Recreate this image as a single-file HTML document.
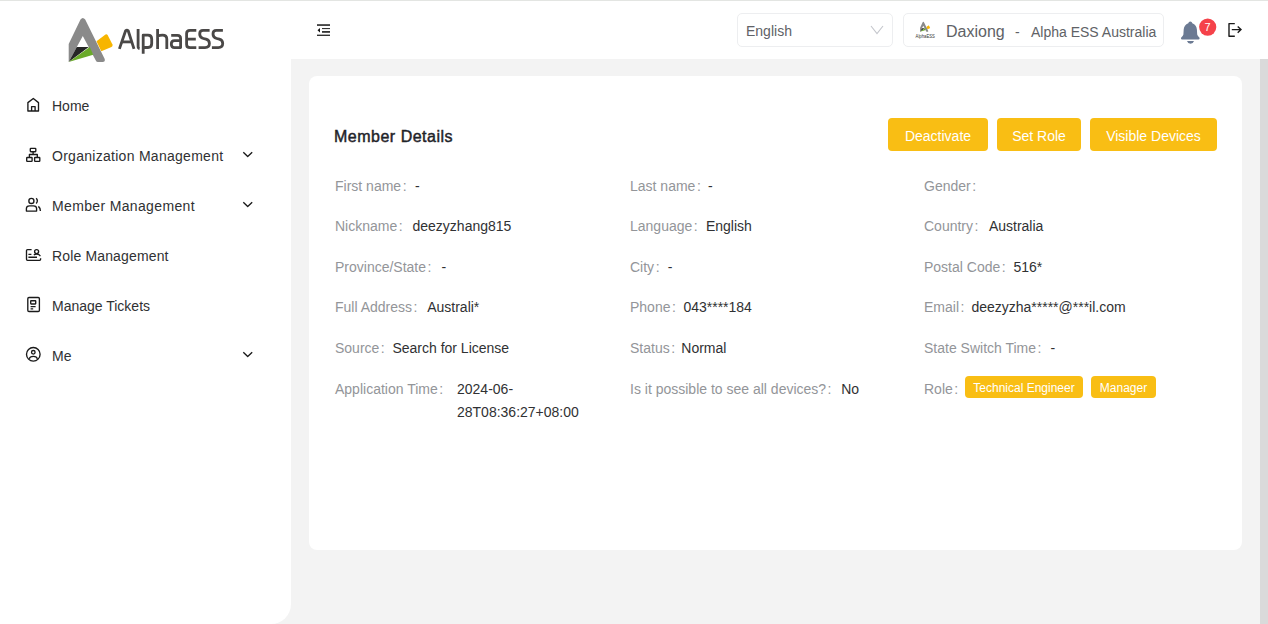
<!DOCTYPE html>
<html><head><meta charset="utf-8">
<style>
*{box-sizing:border-box;margin:0;padding:0}
html,body{width:1268px;height:624px;overflow:hidden;background:#f3f3f3;font-family:"Liberation Sans",sans-serif;}
.abs{position:absolute}
#topline{left:0;top:0;width:1268px;height:1px;background:#e3e5e2}
#header{left:291px;top:0;width:977px;height:59px;background:#fff}
#sidebar{left:0;top:0;width:291px;height:624px;background:#fff;border-bottom-right-radius:20px}
#scroll{left:1260px;top:59px;width:8px;height:565px;background:#dadada}
#card{left:309px;top:76px;width:933px;height:474px;background:#fff;border-radius:8px}
.nav{position:absolute;left:52px;font-size:14px;line-height:22px;color:#303133;white-space:nowrap}
.chev{position:absolute;left:241px}
.lbl{position:absolute;font-size:14px;line-height:20px;color:#939599;white-space:nowrap}
.val{color:#303133}
.c{margin-left:1.5px}
.btn{position:absolute;top:118px;height:33px;background:#f9be14;border-radius:4px;color:#fff;font-size:14px;line-height:37px;text-align:center;white-space:nowrap}
.tag{position:absolute;top:376px;height:22px;background:#f9be14;border-radius:4px;color:#fff;font-size:12px;line-height:25px;text-align:center;white-space:nowrap}
</style></head>
<body>
<div id="sidebar" class="abs"></div>
<div id="header" class="abs"></div>
<div id="topline" class="abs"></div>
<div id="scroll" class="abs"></div>
<div id="card" class="abs"></div>

<!-- logo -->
<svg class="abs" style="left:0;top:0" width="291" height="70" viewBox="0 0 291 70">
  <path d="M68.7,62 L68.7,44 L80.5,19.5 Q82.8,16.5 85.2,19.5 L104.7,59 Q105.5,62 102.5,62 L98,62 Q96.5,62 95.8,60.5 L82.8,36 L76.8,47 L68.7,62 Z" fill="#8a8a8a"/>
  <path d="M68.7,62 L76.8,47 L88.8,47 Z" fill="#262626"/>
  <path d="M68.7,62 L89.8,47 L93.2,54.7 Z" fill="#6aaa2a"/>
  <path d="M96.5,41.3 L105.5,34.5 Q106.8,33.8 107.6,35 L112.5,44.5 Q113,46.2 111.5,47 L101.3,51.3 Z" fill="#f7b500"/>
  <g fill="none" stroke="#4a4847" stroke-width="2.8" stroke-linejoin="round" stroke-linecap="butt">
    <path d="M119.4,48.9 L125.6,30.8 Q126.9,29.6 128.2,30.8 L134,48.9"/>
    <path d="M121.6,41.9 L131.8,41.9"/>
    <path d="M138.1,28.9 L138.1,46.5 Q138.1,48.3 139.6,48.6"/>
    <path d="M143.2,53.8 L143.2,35.1 L148,35.1 Q151.7,35.1 151.7,39 L151.7,43.5 Q151.7,47.5 148,47.5 L143.2,47.5"/>
    <path d="M157.6,28.9 L157.6,48.9 M157.6,36 Q160,35.1 162.5,35.1 Q166.8,35.1 166.8,39 L166.8,48.9"/>
    <path d="M171.2,35.3 L177.5,35.3 Q180.6,35.3 180.6,38.5 L180.6,47.6 L174.5,47.6 Q171.3,47.6 171.3,44 Q171.3,40.6 174.5,40.6 L180.6,40.6"/>
    <path d="M196.3,30.3 L190,30.3 Q186.6,30.3 186.6,33.5 L186.6,44.4 Q186.6,47.6 190,47.6 L196.3,47.6 M186.6,39.1 L195.8,39.1"/>
    <path d="M209.6,30.3 L203,30.3 Q199.7,30.3 199.7,34 Q199.7,37.6 203.4,38.5 L206,39.2 Q209.4,40.1 209.4,43.6 Q209.4,47.6 205,47.6 L198.6,47.6"/>
    <path d="M222.9,30.3 L216.3,30.3 Q213,30.3 213,34 Q213,37.6 216.7,38.5 L219.3,39.2 Q222.7,40.1 222.7,43.6 Q222.7,47.6 218.3,47.6 L211.9,47.6"/>
  </g>
</svg>


<!-- sidebar icons -->
<svg class="abs" style="left:0;top:80px" width="291" height="300" viewBox="0 80 291 300" fill="none" stroke="#1a1a1a" stroke-width="1.35" stroke-linejoin="round">
  <!-- home -->
  <path d="M27.9,111 L27.9,102.6 L33.3,98.5 L38.5,102.6 L38.5,111 Z"/>
  <path d="M31.6,111 L31.6,106.6 L35.1,106.6 L35.1,111"/>
  <!-- org -->
  <rect x="30.3" y="148.3" width="5.5" height="3.4" rx="0.6"/>
  <path d="M33.1,151.7 L33.1,154.5 M29.4,157.4 L29.4,154.5 L37.3,154.5 L37.3,157.4"/>
  <rect x="26.7" y="157.5" width="5.4" height="3.8" rx="0.6"/>
  <rect x="34.6" y="157.5" width="5.2" height="3.8" rx="0.6"/>
  <!-- member -->
  <circle cx="31.4" cy="200.9" r="2.55"/>
  <path d="M26.4,211.1 L26.4,208.6 Q26.4,205.9 29.6,205.9 L33.4,205.9 Q36.6,205.9 36.6,208.6 L36.6,211.1 Z"/>
  <path d="M36.2,198.3 Q38.5,200.9 36.2,203.5"/>
  <path d="M38.4,206.4 Q40.4,208 40.4,211"/>
  <!-- role -->
  <path d="M31.6,249.6 L27.5,249.6 Q26.5,249.6 26.5,250.6 L26.5,259.3 Q26.5,260.3 27.5,260.3 L39.6,260.3 Q40.6,260.3 40.6,259.3 L40.6,258.3"/>
  <path d="M28.4,254.3 L31.4,254.3 M28.4,257.2 L37,257.2"/>
  <circle cx="36.6" cy="251.6" r="2"/>
  <path d="M33.8,254.8 Q36.6,253.4 39,254.6 L40.4,256.1"/>
  <!-- tickets -->
  <rect x="27.8" y="297.5" width="11.6" height="14" rx="1.2"/>
  <rect x="30.7" y="300.7" width="5" height="3.3" rx="0.4"/>
  <path d="M30.6,306.6 L35.6,306.6 M30.6,308.8 L33.2,308.8"/>
  <!-- me -->
  <circle cx="33.3" cy="354.3" r="6.8"/>
  <circle cx="33.3" cy="352.3" r="1.8"/>
  <path d="M29.2,358.8 Q29.8,356.4 33.3,356.4 Q36.8,356.4 37.4,358.8"/>
  <!-- chevrons -->
  <path d="M243.3,152.3 L247.7,156.6 L252.2,152.3"/>
  <path d="M243.3,202.3 L247.7,206.6 L252.2,202.3"/>
  <path d="M243.3,352.3 L247.7,356.6 L252.2,352.3"/>
</svg>

<!-- sidebar nav -->
<div class="nav" style="top:95px">Home</div>
<div class="nav" style="top:145px;letter-spacing:0.28px">Organization Management</div>
<div class="nav" style="top:195px;letter-spacing:0.35px">Member Management</div>
<div class="nav" style="top:245px;letter-spacing:0.15px">Role Management</div>
<div class="nav" style="top:295px">Manage Tickets</div>
<div class="nav" style="top:345px">Me</div>


<!-- header -->
<svg class="abs" style="left:312px;top:20px" width="24" height="20" viewBox="312 20 24 20">
  <rect x="317" y="24.2" width="13" height="1.7" fill="#333"/>
  <rect x="322" y="28" width="8" height="1.1" fill="#333"/>
  <rect x="322" y="31" width="8" height="1.8" fill="#333"/>
  <rect x="317" y="34.6" width="13" height="1.4" fill="#333"/>
  <path d="M317.5,30.2 L320,28 L320,32.4 Z" fill="#111"/>
</svg>
<div class="abs" style="left:737px;top:13px;width:156px;height:34px;border:1px solid #edeef0;border-radius:5px;background:#fff"></div>
<div class="abs" style="left:746px;top:21px;font-size:14px;line-height:20px;color:#606266">English</div>
<svg class="abs" style="left:868px;top:22px" width="18" height="14" viewBox="868 22 18 14">
  <path d="M871,26 L877,33.5 L883,26" fill="none" stroke="#c4c6cc" stroke-width="1.1"/>
</svg>
<div class="abs" style="left:903px;top:13px;width:261px;height:34px;border:1px solid #edeef0;border-radius:5px;background:#fff"></div>
<svg class="abs" style="left:908px;top:16px" width="32" height="26" viewBox="908 16 32 26">
  <g transform="translate(904.5,17.67) scale(0.227)">
  <path d="M68.7,62 L68.7,44 L80.5,19.5 Q82.8,16.5 85.2,19.5 L104.7,59 Q105.5,62 102.5,62 L98,62 Q96.5,62 95.8,60.5 L82.8,36 L76.8,47 L68.7,62 Z" fill="#8a8a8a"/>
  <path d="M68.7,62 L76.8,47 L88.8,47 Z" fill="#262626"/>
  <path d="M68.7,62 L89.8,47 L93.2,54.7 Z" fill="#6aaa2a"/>
  <path d="M96.5,41.3 L105.5,34.5 Q106.8,33.8 107.6,35 L112.5,44.5 Q113,46.2 111.5,47 L101.3,51.3 Z" fill="#f7b500"/>
  </g>
  <text x="915.6" y="37.8" font-family="Liberation Sans" font-size="5.2" fill="#333" textLength="19.3" lengthAdjust="spacingAndGlyphs">AlphaESS</text>
</svg>
<div class="abs" style="left:946px;top:21px;font-size:16px;line-height:22px;color:#606266;white-space:nowrap">Daxiong</div>
<div class="abs" style="left:1015px;top:22px;font-size:14px;line-height:20px;color:#606266">-</div>
<div class="abs" style="left:1031px;top:22px;font-size:14px;line-height:20px;color:#606266;white-space:nowrap">Alpha ESS Australia</div>
<svg class="abs" style="left:1176px;top:14px" width="70" height="34" viewBox="1176 14 70 34">
  <path d="M1190.3,21.4 Q1192,21.4 1192.3,23.3 Q1196.6,25 1196.9,29.5 L1197.2,34.5 Q1197.6,36 1199.4,37.5 Q1200.2,39.4 1198.6,39.4 L1182,39.4 Q1180.4,39.4 1181.2,37.5 Q1183,36 1183.4,34.5 L1183.7,29.5 Q1184,25 1188.3,23.3 Q1188.6,21.4 1190.3,21.4 Z" fill="#6b7a93"/>
  <path d="M1187,40.9 L1194,40.9 Q1193,43.8 1190.5,43.8 Q1188,43.8 1187,40.9 Z" fill="#6b7a93"/>
  <circle cx="1207.7" cy="27.05" r="8.6" fill="#f5424a"/>
  <text x="1207.5" y="31.3" font-family="Liberation Sans" font-size="11" fill="#fff" text-anchor="middle">7</text>
  <path d="M1234.8,23.6 L1229,23.6 L1229,36.2 L1234.8,36.2" fill="none" stroke="#1a1a1a" stroke-width="1.4" stroke-linejoin="round"/>
  <path d="M1231.8,29.6 L1241,29.6 M1237.7,26.4 L1241,29.6 L1237.7,32.8" fill="none" stroke="#1a1a1a" stroke-width="1.4"/>
</svg>

<!-- card title -->
<div class="abs" style="left:334px;top:127px;font-size:16px;line-height:20px;font-weight:normal;-webkit-text-stroke:0.45px #1f2329;letter-spacing:0.5px;color:#1f2329;white-space:nowrap">Member Details</div>
<div class="btn" style="left:888px;width:100px">Deactivate</div>
<div class="btn" style="left:997px;width:84px">Set Role</div>
<div class="btn" style="left:1090px;width:127px">Visible Devices</div>

<!-- details -->
<div class="lbl" style="left:335px;top:176px">First name<span class="c">:</span></div>
<div class="lbl val" style="left:415.1px;top:176px">-</div>
<div class="lbl" style="left:630px;top:176px">Last name<span class="c">:</span></div>
<div class="lbl val" style="left:708px;top:176px">-</div>
<div class="lbl" style="left:924px;top:176px">Gender<span class="c">:</span></div>
<div class="lbl" style="left:335px;top:216px">Nickname<span class="c">:</span></div>
<div class="lbl val" style="left:412.5px;top:216px">deezyzhang815</div>
<div class="lbl" style="left:630px;top:216px">Language<span class="c">:</span></div>
<div class="lbl val" style="left:705.9px;top:216px">English</div>
<div class="lbl" style="left:924px;top:216px">Country<span class="c">:</span></div>
<div class="lbl val" style="left:988.9px;top:216px">Australia</div>
<div class="lbl" style="left:335px;top:257px">Province/State<span class="c">:</span></div>
<div class="lbl val" style="left:441.5px;top:257px">-</div>
<div class="lbl" style="left:630px;top:257px">City<span class="c">:</span></div>
<div class="lbl val" style="left:667.8px;top:257px">-</div>
<div class="lbl" style="left:924px;top:257px">Postal Code<span class="c">:</span></div>
<div class="lbl val" style="left:1013.5px;top:257px">516*</div>
<div class="lbl" style="left:335px;top:297px">Full Address<span class="c">:</span></div>
<div class="lbl val" style="left:427.2px;top:297px">Australi*</div>
<div class="lbl" style="left:630px;top:297px">Phone<span class="c">:</span></div>
<div class="lbl val" style="left:683.4px;top:297px">043****184</div>
<div class="lbl" style="left:924px;top:297px">Email<span class="c">:</span></div>
<div class="lbl val" style="left:971.4px;top:297px">deezyzha*****@***il.com</div>
<div class="lbl" style="left:335px;top:338px">Source<span class="c">:</span></div>
<div class="lbl val" style="left:392.4px;top:338px">Search for License</div>
<div class="lbl" style="left:630px;top:338px">Status<span class="c">:</span></div>
<div class="lbl val" style="left:681.3px;top:338px">Normal</div>
<div class="lbl" style="left:924px;top:338px">State Switch Time<span class="c">:</span></div>
<div class="lbl val" style="left:1050.4px;top:338px">-</div>
<div class="lbl" style="left:335px;top:379px">Application Time<span class="c">:</span></div>
<div class="lbl val" style="left:457px;top:379px">2024-06-</div>
<div class="lbl" style="left:630px;top:379px">Is it possible to see all devices?<span class="c">:</span></div>
<div class="lbl val" style="left:841.2px;top:379px">No</div>
<div class="lbl val" style="left:457px;top:402px">28T08:36:27+08:00</div>
<div class="lbl" style="left:924px;top:379px">Role<span class="c">:</span></div>
<div class="tag" style="left:965px;width:118px">Technical Engineer</div>
<div class="tag" style="left:1091px;width:65px">Manager</div>

</body></html>
